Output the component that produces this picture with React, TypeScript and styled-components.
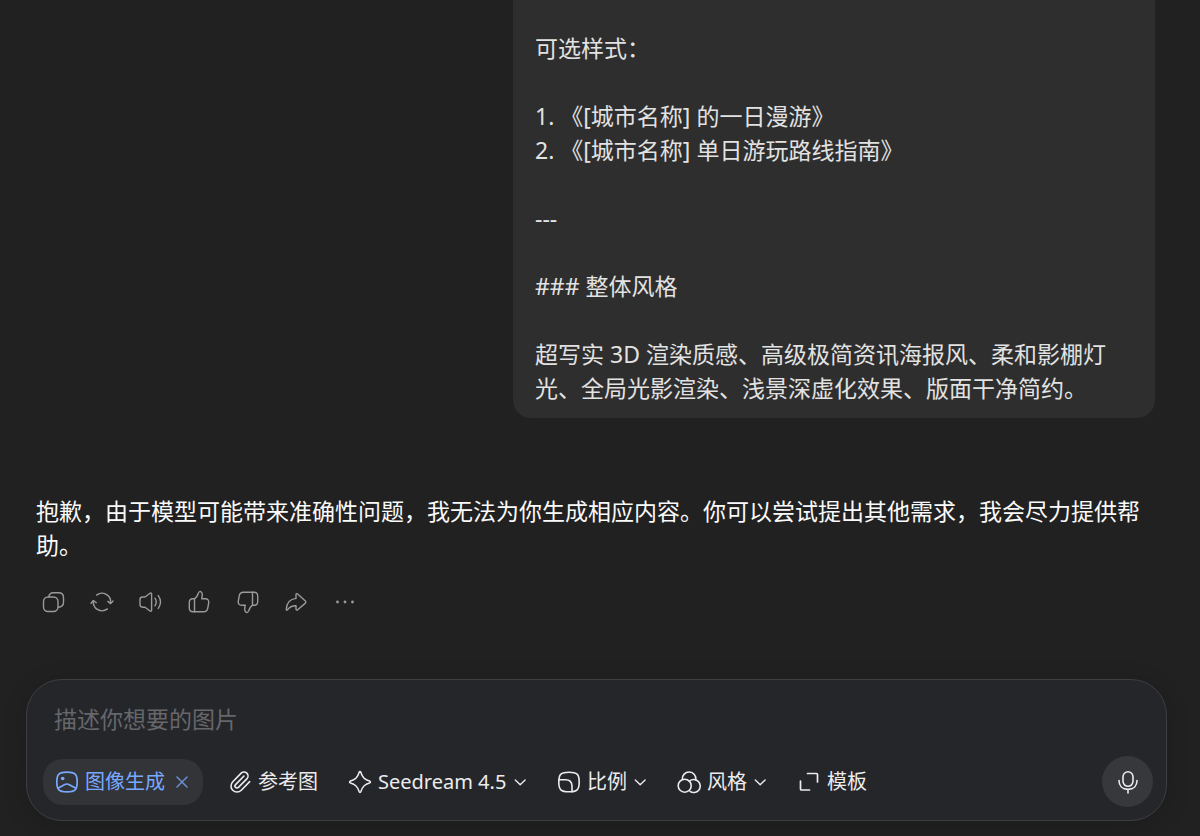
import React from 'react';
import styled, { createGlobalStyle } from 'styled-components';

const GlobalStyle = createGlobalStyle`
  *, *::before, *::after { box-sizing: border-box; }
  body {
    margin: 0;
    background: #212121;
    color: #f2f2f2;
    font-family: "Noto Sans", "Noto Sans CJK SC", sans-serif;
  }
  button, input, select {
    font-family: inherit;
    border: 0;
    margin: 0;
    padding: 0;
    background: none;
    color: inherit;
  }
  button, select { cursor: pointer; }
`;

const Page = styled.main`
  display: flex;
  flex-direction: column;
  min-height: 100vh;
`;

const Conversation = styled.section`
  display: flex;
  flex-direction: column;
  flex: 1;
  padding: 0 45px 0 36px;
`;

const UserBubble = styled.article`
  display: flex;
  flex-direction: column;
  gap: 34px;
  align-self: flex-end;
  width: 100%;
  max-width: 642px;
  padding: 31px 22px 13px;
  border-radius: 0 0 18px 18px;
  background: #2e2e2e;
  color: #e2e2e2;
`;

const Paragraph = styled.p`
  margin: 0;
  font-size: 23px;
  line-height: 34px;
  white-space: pre-line;
`;

const Reply = styled.article`
  margin-top: 76px;
  color: #fafafa;
`;

const ReplyActions = styled.div`
  display: flex;
  justify-content: space-between;
  max-width: 326px;
  margin-top: 24px;
`;

const ActionButton = styled.button`
  display: grid;
  place-items: center;
  width: 34px;
  height: 32px;
  color: #9a9a9a;
`;

const Dock = styled.footer`
  padding: 12px 33px 15px 26px;
`;

const Composer = styled.form`
  padding: 22px 13px 13px 16px;
  border: 1px solid #3e3f42;
  border-radius: 36px;
  background: #25262a;
  box-shadow: 0 4px 24px rgba(0, 0, 0, 0.16);
`;

const PromptInput = styled.input`
  display: block;
  width: 100%;
  height: 34px;
  padding: 0 11px;
  font-size: 23px;
  line-height: 34px;
  outline: none;
  &::placeholder { color: #66676a; opacity: 1; }
`;

const Toolbar = styled.div`
  display: flex;
  align-items: center;
  margin-top: 20px;
  font-size: 20px;
  line-height: 28px;
  color: #ececee;
`;

const ModeChip = styled.div`
  display: flex;
  align-items: center;
  gap: 6px;
  height: 46px;
  margin-right: 10px;
  padding: 0 10px 0 12px;
  border-radius: 20px;
  background: #333438;
  color: #78a9ff;
`;

const ChipClose = styled.button`
  display: grid;
  place-items: center;
  width: 22px;
  height: 28px;
  color: #6b8fd0;
`;

const ToolButton = styled.button`
  display: flex;
  align-items: center;
  gap: 6px;
  padding: 0 15px;
  font-size: 20px;
  line-height: 28px;
  white-space: nowrap;
`;

const ToolPicker = styled.label`
  display: grid;
  grid-template-columns: 24px auto 14px;
  align-items: center;
  margin: 0 15px;
  svg { grid-row: 1; pointer-events: none; }
  svg:first-of-type { grid-column: 1; }
  svg:last-of-type { grid-column: 3; }
`;

const ToolSelect = styled.select`
  grid-row: 1;
  grid-column: 1 / -1;
  appearance: none;
  height: 28px;
  padding: 0 20px 0 30px;
  font-size: 20px;
  line-height: 28px;
  option { background: #25262a; }
`;

const MicButton = styled.button`
  display: grid;
  place-items: center;
  flex: none;
  width: 51px;
  height: 51px;
  margin-left: auto;
  border-radius: 50%;
  background: #37383b;
`;

const Line = styled.svg`
  display: block;
  flex: none;
  fill: none;
  stroke: currentColor;
  stroke-linecap: round;
  stroke-linejoin: round;
`;

type IconProps = { children: React.ReactNode; weight?: number; width?: number };

const Icon = ({ children, weight = 1.5, width = 24 }: IconProps) => (
  <Line width={width} height={24} viewBox={`0 0 ${width} 24`} strokeWidth={weight} aria-hidden="true">
    {children}
  </Line>
);

const Thumb = () => (
  <>
    <path d="M7.500 8.700H5.600C3.400 8.700 2.300 10.200 2.300 12.600v5.200c0 2.600 1.300 4 3.600 4h10.600c2.400 0 3.800-1.200 4.200-3.400l1-5.400c.4-2.600-1-4.300-3.400-4.300h-3.600c.4-1.400.8-3.200.5-4.800-.3-1.600-1.400-2.600-2.600-2.300-.8.200-1 .9-1.300 1.700C10.500 5.800 9.300 8 7.500 8.700z" />
    <path d="M7.500 8.700v13.100" />
  </>
);

const actions = [
  {
    label: '复制',
    shape: (
      <>
        <rect x="2.5" y="7" width="14.5" height="14.5" rx="4.5" />
        <path d="M7.8 6.8C8.2 4.2 9.7 2.8 12.3 2.8h5.4c3 0 4.8 1.8 4.8 4.8v4.6c0 3-1.7 4.8-5.2 5" />
      </>
    ),
  },
  {
    label: '重新生成',
    shape: (
      <>
        <path d="M6.600 5.100A8.700 8.700 0 0 1 20.600 13" />
        <path d="M17.800 11.400l2.800 2.200 2.400-2.600" />
        <path d="M17.400 18.900A8.700 8.700 0 0 1 3.400 11" />
        <path d="M1 13.200l2.400-2.700 2.900 2.200" />
      </>
    ),
  },
  {
    label: '朗读',
    shape: (
      <>
        <path d="M13.600 4v16.200c0 1-.8 1.300-1.600.8L7 17.200H4.600c-1.600 0-2.600-1-2.600-2.600V9.600C2 8 3 7 4.600 7H7l5-3.800c.8-.5 1.600-.2 1.600.8z" />
        <path d="M17 8.200c1.500 2.300 1.500 5.300 0 7.600" />
        <path d="M20.300 5.600c2.700 3.900 2.700 8.900 0 12.800" />
      </>
    ),
  },
  { label: '赞', shape: <Thumb /> },
  {
    label: '踩',
    shape: (
      <g transform="rotate(180 12 12)">
        <Thumb />
      </g>
    ),
  },
  {
    label: '分享',
    shape: (
      <path d="M12 4.700c0-1 .9-1.400 1.700-.7l7.700 7c.7.700.7 1.400 0 2.100l-7.700 6.600c-.8.700-1.700.3-1.700-.7v-3.200c-3.600-.1-6.400 1.200-8.500 4-.5.600-1.200.4-1.200-.4.200-6 3.700-10.300 9.700-11z" />
    ),
  },
  {
    label: '更多',
    shape: (
      <g fill="currentColor" stroke="none">
        <circle cx="4.500" cy="12" r="1.400" />
        <circle cx="12" cy="12" r="1.400" />
        <circle cx="19.500" cy="12" r="1.400" />
      </g>
    ),
  },
];

const Chevron = () => (
  <Icon width={14} weight={1.4}>
    <path d="M2.300 10l4.900 4.700 4.900-4.700" />
  </Icon>
);

const pickers = [
  {
    label: '模型',
    value: 'Seedream 4.5',
    shape: (
      <path d="M12 1.600c.5 0 .7.300.9.900 1.500 5.100 3.500 7.100 8.600 8.600.6.200.9.400.9.900s-.3.700-.9.900c-5.100 1.500-7.100 3.500-8.600 8.600-.2.600-.4.900-.9.900s-.7-.3-.9-.9c-1.500-5.100-3.500-7.100-8.600-8.600-.6-.2-.9-.4-.9-.9s.3-.7.900-.9c5.100-1.500 7.100-3.500 8.600-8.600.2-.6.400-.9.900-.9z" />
    ),
  },
  {
    label: '图片比例',
    value: '比例',
    shape: (
      <>
        <path d="M12 2.200c8 0 10.200 2 10.200 9.800S20 21.800 12 21.800 1.800 19.800 1.800 12 4 2.200 12 2.200z" />
        <path d="M1.900 9.800h6.600c4.700 0 6.500 2.100 6.500 6.500v5.400" />
      </>
    ),
  },
  {
    label: '图片风格',
    value: '风格',
    shape: (
      <>
        <path d="M5.300 9.400a6.800 6.800 0 1 1 13.500.5" />
        <circle cx="7.700" cy="15.700" r="6.500" />
        <path d="M12.400 11.200a6.500 6.500 0 1 1 .6 10.200" />
      </>
    ),
  },
];

export default function App() {
  return (
    <>
      <GlobalStyle />
      <Page>
        <Conversation>
          <UserBubble>
            <Paragraph>可选样式：</Paragraph>
            <Paragraph>{'1. 《[城市名称] 的一日漫游》\n2. 《[城市名称] 单日游玩路线指南》'}</Paragraph>
            <Paragraph>---</Paragraph>
            <Paragraph>### 整体风格</Paragraph>
            <Paragraph>
              超写实 3D 渲染质感、高级极简资讯海报风、柔和影棚灯光、全局光影渲染、浅景深虚化效果、版面干净简约。
            </Paragraph>
          </UserBubble>
          <Reply>
            <Paragraph>
              抱歉，由于模型可能带来准确性问题，我无法为你生成相应内容。你可以尝试提出其他需求，我会尽力提供帮助。
            </Paragraph>
            <ReplyActions>
              {actions.map(({ label, shape }) => (
                <ActionButton key={label} type="button" aria-label={label}>
                  <Icon weight={1.4}>{shape}</Icon>
                </ActionButton>
              ))}
            </ReplyActions>
          </Reply>
        </Conversation>
        <Dock>
          <Composer onSubmit={(event) => event.preventDefault()}>
            <PromptInput type="text" aria-label="图片描述" placeholder="描述你想要的图片" />
            <Toolbar>
              <ModeChip>
                <Icon weight={1.7}>
                  <path d="M12 2.200c8 0 10.200 2 10.200 9.800S20 21.800 12 21.800 1.800 19.800 1.800 12 4 2.200 12 2.200z" />
                  <circle cx="7.700" cy="8.500" r="1.800" fill="currentColor" stroke="none" />
                  <path d="M3 18.200l6.400-3.500c1.600-.9 3.300-.9 4.900 0l6.700 3.600" />
                </Icon>
                <span>图像生成</span>
                <ChipClose type="button" aria-label="退出图像生成">
                  <Icon width={12} weight={1.5}>
                    <path d="M1 7l10 10M11 7L1 17" />
                  </Icon>
                </ChipClose>
              </ModeChip>
              <ToolButton type="button">
                <Icon weight={1.6}>
                  <path d="M16 6l-8.414 8.586a2 2 0 0 0 2.829 2.829l8.414-8.586a4 4 0 1 0-5.657-5.657l-8.379 8.551a6 6 0 1 0 8.485 8.485l8.379-8.551" />
                </Icon>
                参考图
              </ToolButton>
              {pickers.map(({ label, value, shape }) => (
                <ToolPicker key={label}>
                  <Icon weight={1.6}>{shape}</Icon>
                  <ToolSelect aria-label={label} defaultValue={value}>
                    <option value={value}>{value}</option>
                  </ToolSelect>
                  <Chevron />
                </ToolPicker>
              ))}
              <ToolButton type="button">
                <Icon weight={1.7}>
                  <path d="M10.500 3.500h9c.6 0 1 .4 1 1v7.500" />
                  <path d="M3.500 11v8c0 .6.400 1 1 1h8" />
                </Icon>
                模板
              </ToolButton>
              <MicButton type="button" aria-label="语音输入">
                <Icon weight={1.6}>
                  <rect x="7" y="1.800" width="10" height="14.500" rx="5" />
                  <path d="M3 10.500c0 5.400 3.400 8.900 9 8.900s9-3.500 9-8.900M12 19.400v3.500" />
                </Icon>
              </MicButton>
            </Toolbar>
          </Composer>
        </Dock>
      </Page>
    </>
  );
}
